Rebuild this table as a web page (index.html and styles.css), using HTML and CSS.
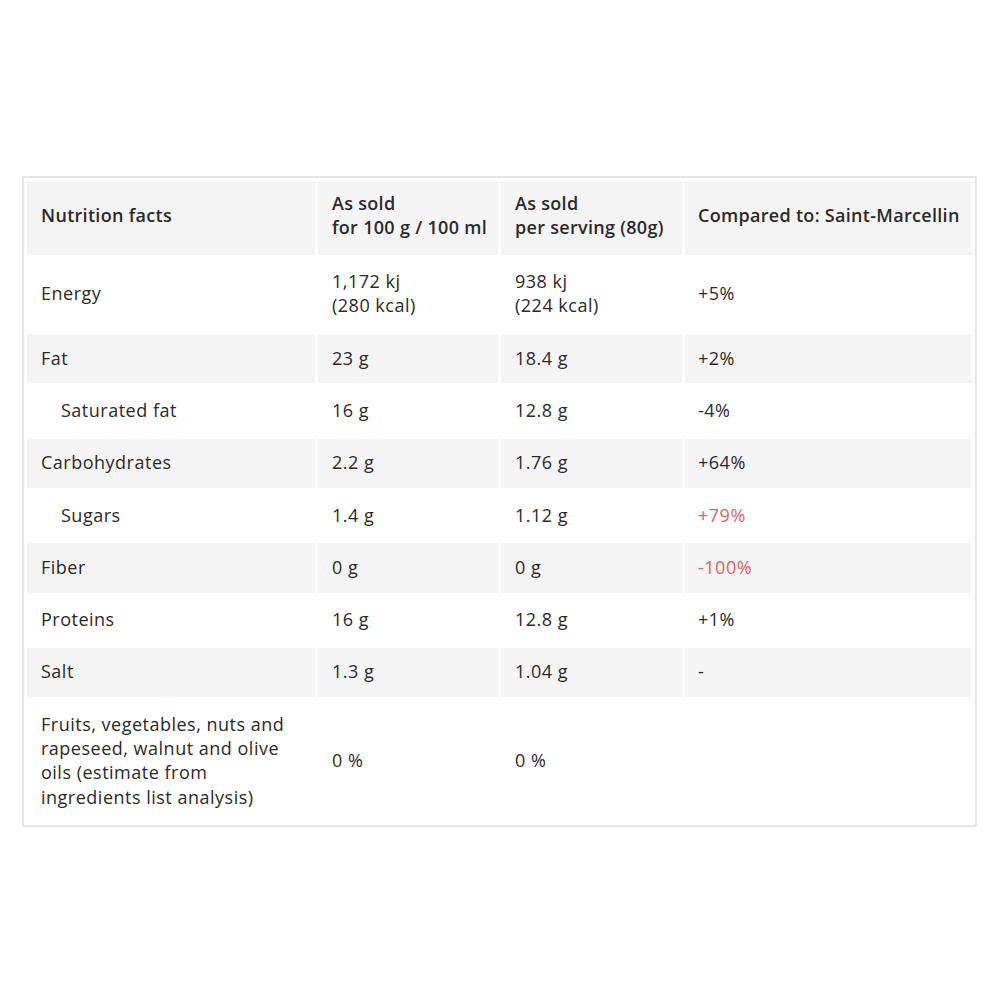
FILE: index.html
```html
<!DOCTYPE html>
<html lang="en">
<head>
<meta charset="utf-8">
<title>Nutrition facts</title>
<link rel="stylesheet" href="styles.css">
</head>
<body>
<div class="wrap">
<table class="nutri">
  <colgroup>
    <col class="c1"><col class="c2"><col class="c3"><col class="c4">
  </colgroup>
  <thead>
    <tr class="alt">
      <th>Nutrition facts</th>
      <th>As sold<br>for 100 g / 100 ml</th>
      <th>As sold<br>per serving (80g)</th>
      <th>Compared to: Saint-Marcellin</th>
    </tr>
  </thead>
  <tbody>
    <tr><td>Energy</td><td>1,172 kj<br>(280 kcal)</td><td>938 kj<br>(224 kcal)</td><td>+5%</td></tr>
    <tr class="alt"><td>Fat</td><td>23 g</td><td>18.4 g</td><td>+2%</td></tr>
    <tr><td class="sub">Saturated fat</td><td>16 g</td><td>12.8 g</td><td>-4%</td></tr>
    <tr class="alt"><td>Carbohydrates</td><td>2.2 g</td><td>1.76 g</td><td>+64%</td></tr>
    <tr><td class="sub">Sugars</td><td>1.4 g</td><td>1.12 g</td><td class="bad">+79%</td></tr>
    <tr class="alt"><td>Fiber</td><td>0 g</td><td>0 g</td><td class="bad">-100%</td></tr>
    <tr><td>Proteins</td><td>16 g</td><td>12.8 g</td><td>+1%</td></tr>
    <tr class="alt"><td>Salt</td><td>1.3 g</td><td>1.04 g</td><td>-</td></tr>
    <tr><td>Fruits, vegetables, nuts and rapeseed, walnut and olive oils (estimate from ingredients list analysis)</td><td>0 %</td><td>0 %</td><td></td></tr>
  </tbody>
</table>
</div>
</body>
</html>
```
FILE: styles.css
```css
html, body {
  margin: 0;
  padding: 0;
  background: #ffffff;
}
body {
  font-family: "Open Sans", "Liberation Sans", sans-serif;
  color: #2a2a2a;
}
.wrap {
  padding: 176px 23px 0 22px;
}
.nutri {
  width: 955px;
  table-layout: fixed;
  border: 2px solid #e6e6e6;
  border-spacing: 3px;
  font-size: 18px;
  line-height: 24.3px;
  letter-spacing: 0.5px;
}
.c1 { width: 288px; }
.c2 { width: 180px; }
.c3 { width: 181px; }
.c4 { width: 287px; }
.nutri th,
.nutri td {
  padding: 11.5px 14px 13.5px;
  text-align: left;
  vertical-align: middle;
}
.nutri th {
  padding-top: 9.5px;
  padding-bottom: 15.5px;
  font-weight: 600;
  white-space: nowrap;
  letter-spacing: 0.3px;
}
.nutri th:last-child,
.nutri td:last-child {
  padding-left: 13px;
}
.nutri tr.alt > th,
.nutri tr.alt > td {
  background: #f5f5f5;
}
.nutri td.sub {
  padding-left: 34px;
}
.nutri td.bad {
  color: #e0625f;
}
```
